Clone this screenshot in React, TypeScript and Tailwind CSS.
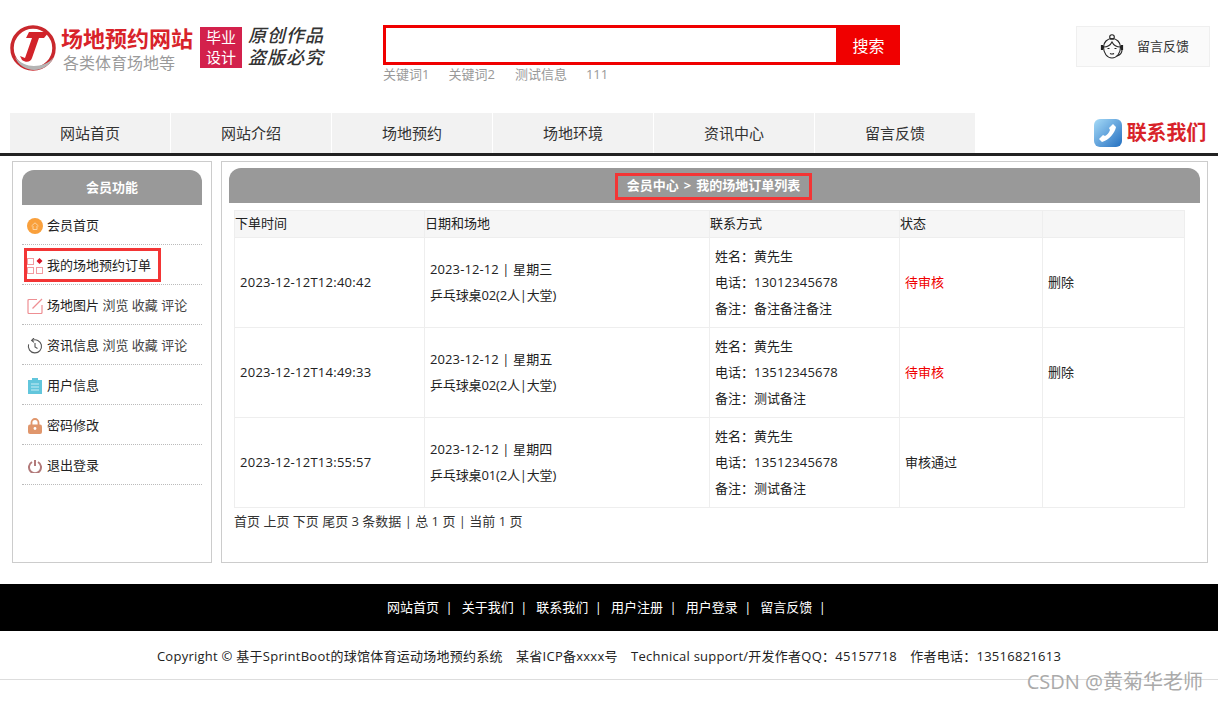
import React from "react";

const NAV = ["网站首页", "网站介绍", "场地预约", "场地环境", "资讯中心", "留言反馈"];
const FOOT = ["网站首页", "关于我们", "联系我们", "用户注册", "用户登录", "留言反馈"];

const ORDERS = [
  { time: "2023-12-12T12:40:42", date: "2023-12-12 | 星期三", place: "乒乓球桌02(2人|大堂)", phone: "13012345678", note: "备注备注备注", status: "待审核", del: true },
  { time: "2023-12-12T14:49:33", date: "2023-12-12 | 星期五", place: "乒乓球桌02(2人|大堂)", phone: "13512345678", note: "测试备注", status: "待审核", del: true },
  { time: "2023-12-12T13:55:57", date: "2023-12-12 | 星期四", place: "乒乓球桌01(2人|大堂)", phone: "13512345678", note: "测试备注", status: "审核通过", del: false },
];

const Logo = () => (
  <svg width="46" height="48" viewBox="0 0 46 48" className="shrink-0">
    <circle cx="23" cy="24" r="21" fill="none" stroke="#c9282d" strokeWidth="3.5" />
    <path d="M5 33c3 8 11 13 19 13 9 0 16-5 20-13-5 6-12 9-20 9-7 0-14-3-19-9z" fill="#b4b4b4" />
    <path d="M19 8h20l-5 6h-5l-7 20c-1 4-6 5-10 2l-2-4 5 2 7-20h-6z" fill="#d2232a" />
  </svg>
);

const Agent = () => (
  <svg width="24" height="26" viewBox="0 0 24 26" fill="none" stroke="#222" strokeWidth="1.1">
    <path d="M3.5 13a8.5 8.5 0 0 1 17 0c0 6-3.5 11-8.5 11S3.500 19 3.500 13z" />
    <path d="M3.500 13c4 0 7-2 8.500-5 1.500 3 4.500 5 8.500 5" />
    <circle cx="12" cy="3" r="2.300" />
    <path d="M2 11v5M22 11v5" strokeWidth="2.200" />
    <path d="M22 16c0 3-2 5-5 6" />
    <path d="M10 19.500c1.500.7 3 .7 4 0" />
    <path d="M7.500 14.500h2M14.500 14.500h2" />
  </svg>
);

const Phone = () => (
  <div className="w-[28px] h-[28px] rounded-[6px] bg-gradient-to-br from-[#a6dbf7] to-[#1f6fc0] flex items-center justify-center shrink-0">
    <svg width="20" height="20" viewBox="0 0 20 20" fill="#fff">
      <path d="M15 1l3 3c-1 6-7 13-14 15l-3-3 4-4 2 1c2-1 4-3 5-6l-1-2z" />
    </svg>
  </div>
);

const IconWrap = ({ children }: { children: React.ReactNode }) => (
  <span className="w-[16px] h-[16px] mr-[4px] flex items-center justify-center shrink-0">{children}</span>
);

const SideIcons: Record<string, React.ReactNode> = {
  home: (
    <svg width="16" height="16" viewBox="0 0 16 16">
      <circle cx="8" cy="8" r="8" fill="#f9a03c" />
      <path d="M4.500 8L8 4.800 11.500 8M6 8v3.500h4V8" fill="none" stroke="#fcd3a0" strokeWidth="1" />
    </svg>
  ),
  order: (
    <svg width="16" height="16" viewBox="0 0 16 16" fill="none" stroke="#f39aa0" strokeWidth="1">
      <rect x=".5" y=".5" width="6" height="6" />
      <rect x=".5" y="9.500" width="6" height="6" />
      <rect x="9.500" y="9.500" width="6" height="6" />
      <path d="M12.500 0l3 3-3 3-3-3z" fill="#d8182a" stroke="none" />
    </svg>
  ),
  pic: (
    <svg width="16" height="16" viewBox="0 0 16 16" fill="none" stroke="#ee8f93" strokeWidth="1.200">
      <path d="M10 1.500H2a1 1 0 0 0-1 1v12a1 1 0 0 0 1 1h12a1 1 0 0 0 1-1V7" />
      <path d="M5.500 10.500L15 1" />
    </svg>
  ),
  news: (
    <svg width="16" height="16" viewBox="0 0 16 16" fill="none" stroke="#555" strokeWidth="1.100">
      <path d="M5 2.400a6.600 6.600 0 1 1-3.400 4" />
      <path d="M7 0L4.600 2.400 7 4.400" />
      <path d="M8 5v4l2.500 1.500" />
    </svg>
  ),
  user: (
    <svg width="14" height="16" viewBox="0 0 14 16">
      <path d="M0 2h4V0h6v2h4v14H0z" fill="#62c6dc" />
      <path d="M3 6h8M3 9h8M3 12h8" stroke="#c8eef6" strokeWidth="1" />
    </svg>
  ),
  lock: (
    <svg width="14" height="16" viewBox="0 0 14 16">
      <path d="M3.500 7V4.500a3.500 3.500 0 0 1 7 0V7" fill="none" stroke="#e0966c" strokeWidth="1.800" />
      <rect y="6.500" width="14" height="9.500" rx="2" fill="#e0966c" />
      <circle cx="7" cy="10.500" r="1.400" fill="#fff" />
    </svg>
  ),
  exit: (
    <svg width="14" height="14" viewBox="0 0 14 14" fill="none" stroke="#b27a7a" strokeWidth="2">
      <path d="M4 3a6 6 0 1 0 6 0" />
      <path d="M7 1v6" />
    </svg>
  ),
};

const SideItem = ({ icon, label, extra, boxed }: { icon: string; label: string; extra?: boolean; boxed?: boolean }) => (
  <li className="relative h-[40px] flex items-center pl-[5px] pt-[2px] border-b border-dotted border-[#bbb]">
    <IconWrap>{SideIcons[icon]}</IconWrap>
    <span className="text-[13px] text-[#222]">
      {label}
      {extra && <span className="text-[#444]"> 浏览 收藏 评论</span>}
    </span>
    {boxed && <span className="absolute left-[2px] top-[3px] w-[137px] h-[34px] border-[3px] border-[#f33535]" />}
  </li>
);

const Cell = ({ className = "", children }: { className?: string; children?: React.ReactNode }) => (
  <td className={`border border-[#eeeeee] pl-[5px] pb-[2px] text-[13px] text-[#222] leading-[26px] ${className}`}>{children}</td>
);

export default function App() {
  return (
    <div className="relative w-[1218px] h-[702px] overflow-hidden bg-white font-['Open_Sans','Noto_Sans_CJK_SC',sans-serif] text-[13px]">
      {/* header */}
      <header className="h-[113px] flex items-start pl-[10px] pr-[8px]">
        <div className="mt-[24px]"><Logo /></div>
        <div className="ml-[5px] mt-[22px] w-[139px]">
          <div className="text-[22px] leading-[32px] font-bold text-[#d8232a] whitespace-nowrap">场地预约网站</div>
          <div className="-mt-[2px] text-[16px] leading-[22px] text-[#9a9a9a] ml-[2px] whitespace-nowrap">各类体育场地等</div>
        </div>
        <div className="mt-[27px] w-[42px] h-[41px] bg-[#d3214c] text-white text-[15px] leading-[20px] text-center">毕业<br />设计</div>
        <div className="mt-[26px] ml-[6px] w-[135px] flex flex-col gap-[3px] text-[18px] leading-[19px] tracking-[1px] text-[#333] italic font-medium whitespace-nowrap">
          <span>原创作品</span>
          <span>盗版必究</span>
        </div>
        <div className="mt-[25px] w-[517px]">
          <div className="h-[40px] flex border-[3px] border-[#f00000]">
            <input className="flex-1 min-w-0 outline-none" aria-label="搜索" />
            <button className="w-[61px] bg-[#f00000] text-white text-[16px] pl-[4px] pt-[1px]">搜索</button>
          </div>
          <div className="flex gap-[19px] text-[13px] leading-[18px] text-[#999]">
            <span>关键词1</span><span>关键词2</span><span className="ml-[1px]">测试信息</span><span>111</span>
          </div>
        </div>
        <div className="ml-auto mt-[26px] w-[134px] h-[41px] flex items-center pl-[23px] gap-[13px] bg-[#fafafa] border border-[#efefef] text-[13px] text-[#333]">
          <Agent />
          <span className="whitespace-nowrap">留言反馈</span>
        </div>
      </header>

      {/* nav */}
      <nav className="h-[43px] border-b-[3px] border-[#222] pl-[10px] pr-[12px] flex items-start justify-between">
        <ul className="flex">
          {NAV.map((n) => (
            <li key={n} className="w-[161px] h-[40px] flex items-center justify-center bg-[#f2f2f2] border-r border-white text-[15px] text-[#333]">{n}</li>
          ))}
        </ul>
        <div className="flex items-center gap-[5px] h-[40px]">
          <Phone />
          <span className="text-[20px] tracking-[-0.2px] font-bold text-[#d8232a] whitespace-nowrap">联系我们</span>
        </div>
      </nav>

      {/* body */}
      <div className="mt-[5px] pl-[12px] pr-[10px] flex gap-[9px] h-[402px]">
        <aside className="w-[200px] border border-[#cccccc] pt-[8px] px-[9px]">
          <div className="h-[35px] rounded-t-[12px] bg-[#999999] text-white font-bold text-[13px] flex items-center justify-center">会员功能</div>
          <ul>
            <SideItem icon="home" label="会员首页" />
            <SideItem icon="order" label="我的场地预约订单" boxed />
            <SideItem icon="pic" label="场地图片" extra />
            <SideItem icon="news" label="资讯信息" extra />
            <SideItem icon="user" label="用户信息" />
            <SideItem icon="lock" label="密码修改" />
            <SideItem icon="exit" label="退出登录" />
          </ul>
        </aside>

        <main className="flex-1 border border-[#cccccc] pt-[6px] px-[7px]">
          <div className="h-[35px] rounded-t-[12px] bg-[#999999] flex items-center justify-center">
            <span className="h-[27px] w-[197px] mt-[1px] mr-[2px] border-[3px] border-[#f33535] text-white font-bold text-[13px] flex items-center justify-center whitespace-nowrap">
              <span>会员中心</span>
              <span className="mx-[5px]">&gt;</span>
              <span>我的场地订单列表</span>
            </span>
          </div>
          <table className="mt-[7px] ml-[5px] w-[950px] table-fixed border-collapse">
            <colgroup>
              <col className="w-[190px]" /><col className="w-[285px]" /><col className="w-[190px]" /><col className="w-[143px]" /><col className="w-[142px]" />
            </colgroup>
            <thead>
              <tr className="h-[27px] bg-[#f6f6f6]">
                {["下单时间", "日期和场地", "联系方式", "状态", ""].map((h, i) => (
                  <th key={i} className="border border-[#eeeeee] text-left font-normal text-[13px] text-[#222]">{h}</th>
                ))}
              </tr>
            </thead>
            <tbody>
              {ORDERS.map((o) => (
                <tr key={o.time} className="h-[90px]">
                  <Cell className="tracking-[0.26px]">{o.time}</Cell>
                  <Cell><span className="tracking-[0.1px]">{o.date}</span><br /><span className="tracking-[-0.15px]">{o.place}</span></Cell>
                  <Cell>姓名：黄先生<br />电话：<span className="tracking-[0.2px]">{o.phone}</span><br />备注：{o.note}</Cell>
                  <Cell className={o.del ? "text-[#f00000]" : ""}>{o.status}</Cell>
                  <Cell className="text-[#8a6414]">{o.del ? "删除" : ""}</Cell>
                </tr>
              ))}
            </tbody>
          </table>
          <div className="mt-[3px] ml-[5px] leading-[20px] text-[13px] text-[#333]">首页 上页 下页 尾页 3 条数据 | 总 1 页 | 当前 1 页</div>
        </main>
      </div>

      {/* footer */}
      <div className="mt-[21px] h-[47px] bg-black flex items-center justify-center gap-[9px] text-white text-[13px] pr-[5px]">
        {FOOT.map((f) => (
          <span key={f} className="flex gap-[6.500px]"><span>{f}</span><span>|</span></span>
        ))}
      </div>
      <div className="h-[49px] pt-[3px] border-b border-[#dddddd] flex items-center justify-center text-[13px] text-[#222] whitespace-pre tracking-[0.26px]">
        Copyright © 基于SprintBoot的球馆体育运动场地预约系统　某省ICP备xxxx号　Technical support/开发作者QQ：45157718　作者电话：13516821613
      </div>
      <div className="absolute right-[15px] top-[669px] text-[20px] leading-[26px] text-[#aaaaaa] whitespace-nowrap">CSDN @黄菊华老师</div>
    </div>
  );
}
